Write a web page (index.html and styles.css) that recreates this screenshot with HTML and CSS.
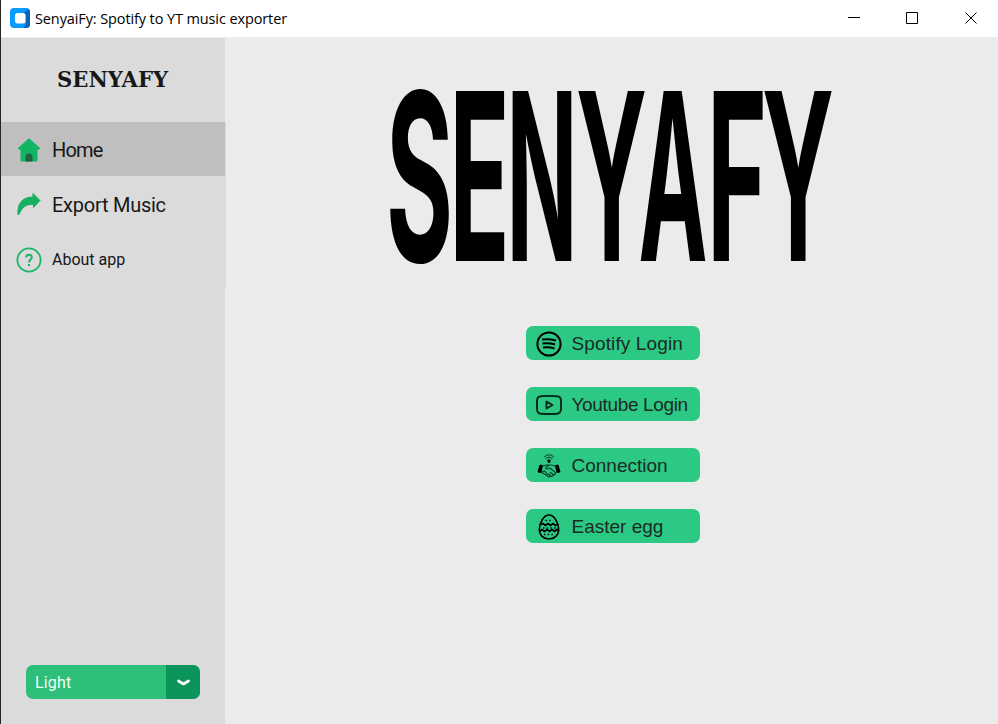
FILE: index.html
```html
<!DOCTYPE html>
<html lang="en">
<head>
<meta charset="utf-8">
<title>SenyaiFy: Spotify to YT music exporter</title>
<link rel="stylesheet" href="styles.css">
</head>
<body>
<div class="window">
  <header class="titlebar">
    <svg class="app-icon" width="20" height="20" viewBox="0 0 20 20"><rect width="20" height="20" rx="4" fill="#0a9bff"/><path d="M14 5 18 1Q20 2 20 4V16Q20 20 16 20H13L16 16V7Z" fill="#0864b8"/><rect x="5" y="5" width="10.500" height="10.500" rx="2.500" fill="#fff"/></svg>
    <span class="title">SenyaiFy: Spotify to YT music exporter</span>
    <svg class="controls" width="150" height="37" viewBox="0 0 150 37" fill="none" stroke="#000"><path d="M0 17.500H12M58.500 12.500H69.500V23.500H58.500ZM117.500 12.500 128.500 23.500M128.500 12.500 117.500 23.500"/></svg>
  </header>
  <div class="body">
    <aside class="sidebar">
      <svg class="brand" width="224" height="84" viewBox="0 0 224 84"><text class="brand-text" x="56" y="48.500" textLength="111" lengthAdjust="spacingAndGlyphs">SENYAFY</text></svg>
      <nav>
        <a class="item active"><svg width="26" height="26" viewBox="0 0 26 26"><path d="M13 2.500 23 11.500H20.500V23.500H5.500V11.500H3Z" fill="#12b563" stroke="#12b563" stroke-width="2" stroke-linejoin="round"/><path d="M9.500 24.500V20Q9.500 16.500 13 16.500T16.500 20V24.500Z" fill="#20613f"/></svg><span>Home</span></a>
        <a class="item"><svg width="26" height="26" viewBox="0 0 26 26"><path d="M17 1.500 24 8.500 17.500 15.500V12.500C10 12 6 15 3 22.500H2C1 12 6 5 17 5Z" fill="#17b060" stroke="#17b060" stroke-linejoin="round"/></svg><span>Export Music</span></a>
        <a class="item small"><svg width="26" height="26" viewBox="0 0 26 26" fill="none" stroke="#1bb468" stroke-width="1.800"><circle cx="13" cy="13" r="11.600"/><path d="M10.200 10.600Q10.200 7.700 13 7.700T15.800 10.500C15.800 12.500 13 12.500 13 15.500M13 17V19" stroke-width="2"/></svg><span>About app</span></a>
      </nav>
      <div class="select"><span>Light</span><div class="arrow"><svg width="14" height="8" viewBox="0 0 14 8" fill="none" stroke="#fff" stroke-width="2.700" stroke-linecap="round" stroke-linejoin="round"><path d="M2.500 2 7.500 5 12.500 2"/></svg></div></div>
    </aside>
    <main>
      <svg class="hero" width="448" height="300" viewBox="388 26 448 300"><text class="hero-text" y="260.500"><tspan x="386" textLength="67" lengthAdjust="spacingAndGlyphs">S</tspan><tspan x="449.500" textLength="60" lengthAdjust="spacingAndGlyphs">E</tspan><tspan x="506.500" textLength="71" lengthAdjust="spacingAndGlyphs">N</tspan><tspan x="576" textLength="71" lengthAdjust="spacingAndGlyphs">Y</tspan><tspan x="638.500" textLength="69" lengthAdjust="spacingAndGlyphs">A</tspan><tspan x="707" textLength="60" lengthAdjust="spacingAndGlyphs">F</tspan><tspan x="762" textLength="72" lengthAdjust="spacingAndGlyphs">Y</tspan></text></svg>
      <div class="actions">
        <button><svg width="26" height="26" viewBox="0 0 26 26" fill="none" stroke="#000" stroke-width="2"><circle cx="13" cy="13" r="11.600"/><path d="M6 8.500Q13 7.500 20 9.500M6.500 12.500Q13 11.500 19 13.500M7 16.500Q13 15.500 18.500 17.500"/></svg><span class="spotify">Spotify Login</span></button>
        <button><svg width="26" height="26" viewBox="0 0 26 26" fill="none" stroke="#03291a" stroke-width="1.900" stroke-linejoin="round"><path d="M5 4.300Q13 3.500 21 4.300Q25 4.500 25 9V17Q25 21 21 21.700Q13 22.300 5 21.700Q1 21.500 1 17V9Q1 4.500 5 4.300ZM10.500 9.500V16.500L16.500 13Z"/></svg><span class="youtube">Youtube Login</span></button>
        <button><svg width="26" height="26" viewBox="0 0 26 26" fill="none" stroke="#063e24"><path d="M8 4Q13-.500 18 4M9.500 5.500Q13 2.500 16.500 5.500M11 7.500Q13 5.500 15 7.500" stroke-width="1"/><circle cx="13" cy="8.500" r="1.400" fill="#000" stroke="none"/><path d="M4 12 6.500 12.500 5 19.500 2 19ZM22 12 19.500 12.500 21 19.500 24 19Z" fill="#000" stroke="#000"/><path d="M6 13 11 12 15 12 19.500 13M5 19 10 22 13 24 15 22M13 12 9.500 15Q11 17 14 15L20 20 18 22 14 19M18 22 15.500 23.500 12.500 20.500M6 19 8.500 18 12 22" stroke-width="1.100"/></svg><span>Connection</span></button>
        <button><svg width="26" height="26" viewBox="0 0 26 26" fill="none" stroke="#000"><path d="M13 1C18.500 1 22.700 9.500 22.700 15.500C22.700 21 18.500 25 13 25S3.300 21 3.300 15.500C3.300 9.500 7.500 1 13 1Z" stroke-width="1.600"/><path d="M5 10.500 7 9.500 9.500 11.500 12 9.500 14.500 11.500 17 9.500 19.500 11.500 21 10.500M3.500 17.500 6 15.500 8.500 17.500 11 15.500 13.500 17.500 16 15.500 18.500 17.500 21 15.500 22.500 17" stroke-width="1.700"/><path d="M9.500 6.500H17M7 14H20M8 20.500H19" stroke-width="1.400" stroke-dasharray="1.400 2.300"/></svg><span>Easter egg</span></button>
      </div>
    </main>
  </div>
</div>
</body>
</html>
```
FILE: styles.css
```css
* { box-sizing: border-box; }
body { margin: 0; width: 998px; height: 724px; overflow: hidden; background: #ebebeb; }
.window { height: 724px; display: flex; flex-direction: column; border-left: 1px solid #252525; }
.titlebar { height: 37px; flex: none; background: #fff; display: flex; align-items: center; padding-left: 9px; }
.app-icon { margin-bottom: 1px; }
.title { margin-left: 5px; font: 14.500px "Open Sans", sans-serif; letter-spacing: -0.110px; color: #000; white-space: nowrap; }
.controls { margin-left: auto; }
.body { flex: 1; display: flex; border-top: 1px solid #ededed; }
.sidebar { width: 224px; background: #dbdbdb; display: flex; flex-direction: column; }
.brand { display: block; }
.brand-text { font: bold 22px "DejaVu Serif", serif; fill: #171717; }
nav { width: 225px; height: 166px; background: #dbdbdb; }
.item { display: flex; align-items: center; width: 224px; height: 54px; margin-bottom: 1px; padding: 2px 0 0 15px; gap: 10px; font: 20px Roboto, sans-serif; letter-spacing: -0.250px; color: #171717; }
.item.active { background: #bfbfbf; letter-spacing: -0.800px; }
.item.small { font-size: 16px; letter-spacing: 0; padding-top: 1px; }
.select { width: 174px; height: 34px; margin: auto 0 25px 25px; border-radius: 7px; overflow: hidden; display: flex; background: #2dbe79; color: #f0fff7; font: 16px/36px Roboto, sans-serif; letter-spacing: 0.150px; padding-left: 9px; }
.arrow { width: 34px; margin-left: auto; background: #0c955a; display: flex; align-items: center; justify-content: center; padding-top: 2px; }
main { flex: 1; display: flex; flex-direction: column; align-items: center; }
.hero { display: block; margin-top: -12px; flex: none; }
.hero-text { font: 700 233px Inter, sans-serif; fill: #000; }
.actions { display: flex; flex-direction: column; gap: 27px; margin-left: 2px; }
button { width: 174px; height: 34px; border: 0; border-radius: 7px; background: #2cc985; padding: 1px 0 0 10px; display: flex; align-items: center; gap: 10px; font: 19px "Liberation Sans", sans-serif; color: #1c2b24; white-space: nowrap; }
.spotify { letter-spacing: 0.120px; }
.youtube { letter-spacing: -0.350px; }
```
